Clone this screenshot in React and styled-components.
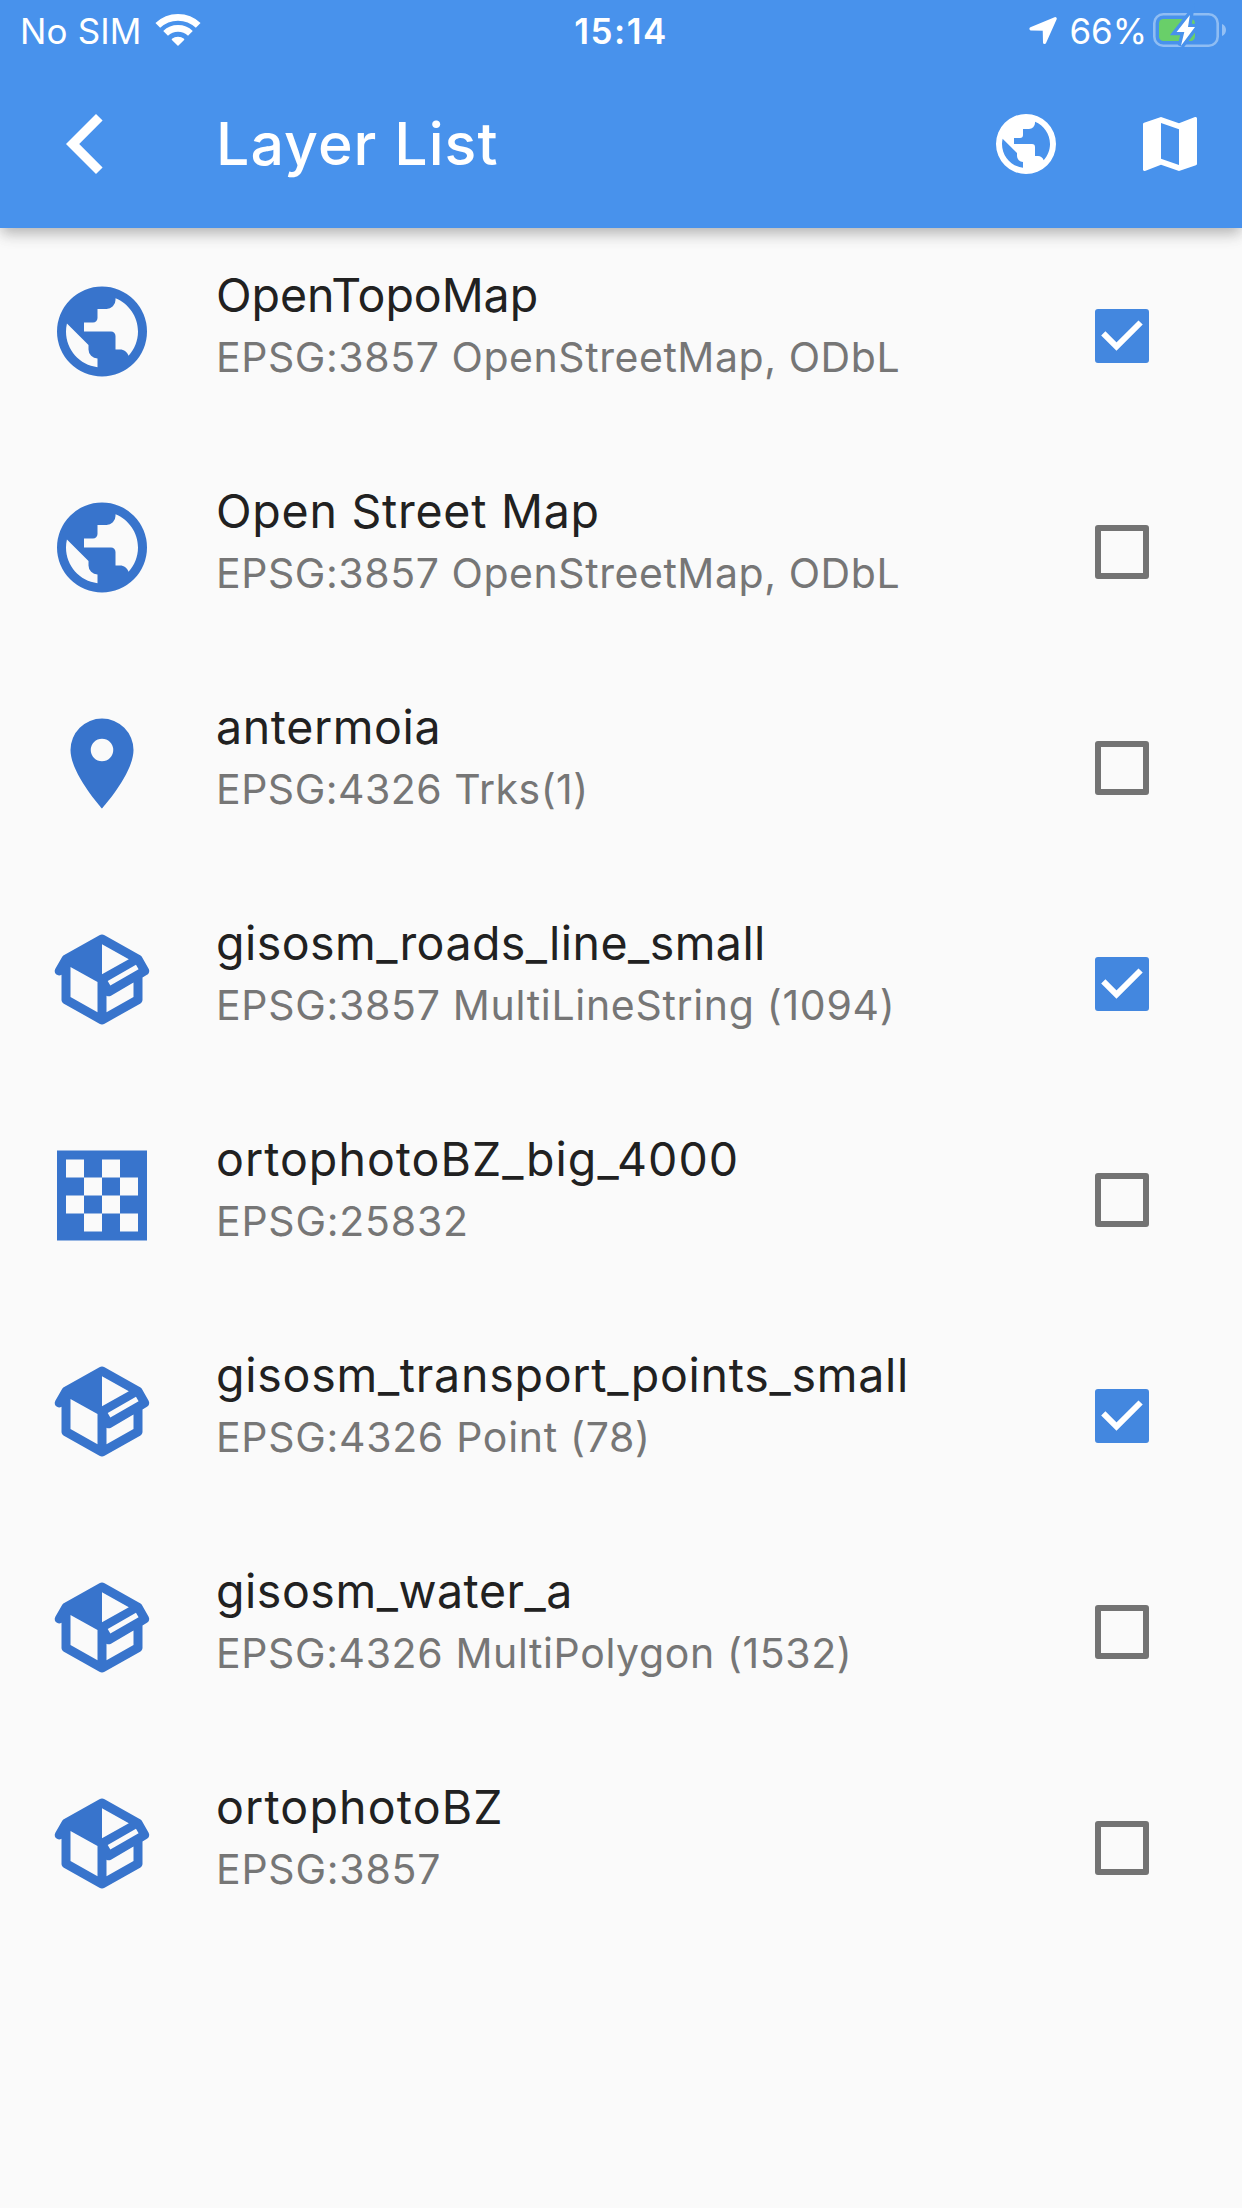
import React from "react";
import styled, { createGlobalStyle } from "styled-components";

const GlobalStyle = createGlobalStyle`
  *, *::before, *::after { box-sizing: border-box; }
  body {
    margin: 0;
    background: #fafafa;
    font-family: Inter, Roboto, "Liberation Sans", sans-serif;
  }
`;

const Screen = styled.div`
  display: flex;
  flex-direction: column;
  width: 1242px;
  height: 2208px;
  overflow: hidden;
  background: #fafafa;
`;

const Header = styled.header`
  flex: none;
  display: flex;
  flex-direction: column;
  height: 228px;
  background: #4892ec;
  color: #fff;
  box-shadow: 0 6px 12px -3px rgba(0, 0, 0, 0.17), 0 8px 14px rgba(0, 0, 0, 0.11),
    0 3px 22px rgba(0, 0, 0, 0.06);
`;

const StatusBar = styled.div`
  display: grid;
  grid-template-columns: 1fr auto 1fr;
  height: 60px;
  padding: 0 14px 0 20px;
  line-height: 62px;
  font-size: 35px;
`;

const StatusGroup = styled.div`
  display: flex;
  align-items: flex-start;
  justify-content: ${(p) => (p.$end ? "flex-end" : "flex-start")};
  height: 60px;
`;

const StatusText = styled.span`
  letter-spacing: ${(p) => p.$track || 0}px;
  white-space: nowrap;
`;

const Clock = styled.span`
  padding-right: 6px;
  font-weight: 600;
  letter-spacing: 1.5px;
`;

const StatusIcon = styled.svg`
  display: block;
  flex: none;
  height: 60px;
  width: ${(p) => p.$width}px;
  margin-left: ${(p) => p.$gap || 0}px;
`;

const AppBar = styled.div`
  display: flex;
  align-items: center;
  height: 168px;
  padding: 0 36px 0 60px;
`;

const IconButton = styled.button`
  display: grid;
  place-items: center;
  width: 72px;
  height: 72px;
  padding: 0;
  border: 0;
  background: none;
  color: inherit;
`;

const Glyph = styled.svg`
  display: block;
  width: ${(p) => p.$size}px;
  height: ${(p) => p.$size}px;
  fill: currentColor;
`;

const Title = styled.h1`
  flex: 1;
  margin: 0;
  padding-left: 84px;
  font-size: 59px;
  font-weight: 500;
  line-height: 72px;
  letter-spacing: 1.05px;
`;

const Actions = styled.div`
  display: flex;
  gap: 72px;
`;

const List = styled.ul`
  margin: 0;
  padding: 0;
  list-style: none;
`;

const Row = styled.li`
  display: flex;
  align-items: flex-start;
  height: 216px;
  padding: 0 93px 0 48px;
`;

const Leading = styled.div`
  flex: none;
  width: 108px;
  margin: 49px 60px 0 0;
  color: #3874cc;
`;

const Text = styled.div`
  display: flex;
  flex: 1;
  flex-direction: column;
  gap: 2px;
  padding-top: 37px;
  white-space: nowrap;
`;

const Name = styled.span`
  color: #212121;
  font-size: 46.5px;
  line-height: 60px;
  letter-spacing: ${(p) => p.$track}px;
`;

const Detail = styled.span`
  color: #767676;
  font-size: 41px;
  line-height: 60px;
  letter-spacing: ${(p) => p.$track}px;
`;

const Box = styled.span`
  flex: none;
  width: 54px;
  height: 54px;
  margin-top: 81px;
  border: 6px solid ${(p) => (p.$checked ? "#4387df" : "#737373")};
  border-radius: 3px;
  background: ${(p) => (p.$checked ? "#4387df" : "transparent")};
`;

const Tick = styled.svg`
  display: block;
  width: 42px;
  height: 42px;
  fill: none;
  stroke: #fff;
  stroke-width: 6;
`;

const PATHS = {
  globe:
    "M17.9,17.39C17.64,16.59 16.89,16 16,16H15V13A1,1 0 0,0 14,12H8V10H10A1,1 0 0,0 11,9V7H13A2,2 0 0,0 15,5V4.59C17.93,5.77 20,8.64 20,12C20,14.08 19.2,15.97 17.9,17.39M11,19.93C7.05,19.44 4,16.08 4,12C4,11.38 4.08,10.78 4.21,10.21L9,15V16A2,2 0 0,0 11,18M12,2A10,10 0 0,0 2,12A10,10 0 0,0 12,22A10,10 0 0,0 22,12A10,10 0 0,0 12,2Z",
  map: "M20.5 3l-.16.03L15 5.1 9 3 3.36 4.9c-.21.07-.36.25-.36.48V20.5c0 .28.22.5.5.5l.16-.03L9 18.9l6 2.1 5.64-1.9c.21-.07.36-.25.36-.48V3.5c0-.28-.22-.5-.5-.5zM15 19l-6-2.11V5l6 2.11V19z",
  back: "M12 2L14.2 4.2L6.4 12L14.2 19.8L12 22L2 12Z",
  pin: "M12,11.5A2.5,2.5 0 0,1 9.5,9A2.5,2.5 0 0,1 12,6.5A2.5,2.5 0 0,1 14.5,9A2.5,2.5 0 0,1 12,11.5M12,2A7,7 0 0,0 5,9C5,14.25 12,22 12,22C12,22 19,14.25 19,9A7,7 0 0,0 12,2Z",
  package:
    "M2,10.96C1.5,10.68 1.35,10.07 1.63,9.59L3.13,7C3.24,6.8 3.41,6.66 3.6,6.58L11.43,2.18C11.59,2.06 11.79,2 12,2C12.21,2 12.41,2.06 12.57,2.18L20.47,6.62C20.66,6.72 20.82,6.88 20.91,7.08L22.36,9.6C22.64,10.08 22.47,10.69 22,10.96L21,11.54V16.5C21,16.88 20.79,17.21 20.47,17.38L12.57,21.82C12.41,21.94 12.21,22 12,22C11.79,22 11.59,21.94 11.43,21.82L3.53,17.38C3.21,17.21 3,16.88 3,16.5V10.96C2.7,11.13 2.32,11.14 2,10.96M12,4.15V10.85L17.96,7.5L12,4.15M5,15.91L11,19.29V12.58L5,9.21V15.91M19,15.91V12.69L14,15.59C13.67,15.77 13.3,15.76 13,15.6V19.29L19,15.91M13.85,13.36L20.13,9.73L19.55,8.72L13.27,12.35L13.85,13.36Z",
  raster:
    "M2,2H22V22H2ZM4,4V8H8V4ZM12,4V8H16V4ZM8,8V12H12V8ZM16,8V12H20V8ZM4,12V16H8V12ZM12,12V16H16V12ZM8,16V20H12V16ZM16,16V20H20V16Z",
};

function Icon({ name, size, shift = 0 }) {
  return (
    <Glyph $size={size} viewBox={`0 ${shift} 24 24`} aria-hidden="true">
      <path fillRule="evenodd" d={PATHS[name]} />
    </Glyph>
  );
}

function Wifi() {
  return (
    <StatusIcon $width={48} $gap={12} viewBox="154 0 48 60">
      <g fill="none" stroke="#fff" strokeWidth="6.8">
        <path d="M157.8 25.4A29.2 29.2 0 0 1 198.2 25.4" />
        <path d="M165.6 33.4A17.8 17.8 0 0 1 190.4 33.4" />
      </g>
      <path
        d="M178 45L172.4 39.4A8.6 8.6 0 0 1 183.6 39.4Z"
        fill="#fff"
        stroke="#fff"
        strokeWidth="1.4"
        strokeLinejoin="round"
      />
    </StatusIcon>
  );
}

function Location() {
  return (
    <StatusIcon $width={30} viewBox="0 -15 30 60">
      <path
        d="M27.2 3.7L3 13.8L16.3 14.2L16.6 27.4Z"
        fill="#fff"
        stroke="#fff"
        strokeWidth="3.2"
        strokeLinejoin="round"
      />
    </StatusIcon>
  );
}

const BOLT = "M39.9 15L26.6 32H34.3L31 45.7L45 27H38Z";

function Battery() {
  return (
    <StatusIcon $width={78} $gap={3} viewBox="0 0 78 60">
      <rect x="4.3" y="14.3" width="63.4" height="31.4" rx="9" fill="none" stroke="#8fbdf3" strokeWidth="2.6" />
      <path d="M72 24C74.8 25 76 27.5 76 30S74.8 35 72 36Z" fill="#94c0f4" />
      <rect x="9" y="19" width="36" height="22" rx="4.5" fill="#69cf69" />
      <path d={BOLT} fill="#4892ec" stroke="#4892ec" strokeWidth="6.6" />
      <path d={BOLT} fill="#fff" />
    </StatusIcon>
  );
}

function Checkbox({ checked }) {
  return (
    <Box $checked={checked} role="checkbox" aria-checked={checked}>
      {checked && (
        <Tick viewBox="6 6 42 42">
          <path d="M8.3 24.4L21.5 37.6L45.6 13.5" />
        </Tick>
      )}
    </Box>
  );
}

const layers = [
  { icon: "globe", name: "OpenTopoMap", detail: "EPSG:3857 OpenStreetMap, ODbL", on: true, track: [-0.05, 0.56] },
  { icon: "globe", name: "Open Street Map", detail: "EPSG:3857 OpenStreetMap, ODbL", on: false, track: [0.75, 0.56] },
  { icon: "pin", name: "antermoia", detail: "EPSG:4326 Trks(1)", on: false, track: [0.61, 0.5] },
  { icon: "package", name: "gisosm_roads_line_small", detail: "EPSG:3857 MultiLineString (1094)", on: true, track: [0.45, 0.69] },
  { icon: "raster", name: "ortophotoBZ_big_4000", detail: "EPSG:25832", on: false, track: [1.03, 0.76] },
  { icon: "package", name: "gisosm_transport_points_small", detail: "EPSG:4326 Point (78)", on: true, track: [0.74, 0.69] },
  { icon: "package", name: "gisosm_water_a", detail: "EPSG:4326 MultiPolygon (1532)", on: false, track: [0.53, 0.61] },
  { icon: "package", name: "ortophotoBZ", detail: "EPSG:3857", on: false, track: [1.16, 0.76] },
];

export default function App() {
  return (
    <>
      <GlobalStyle />
      <Screen>
        <Header>
          <StatusBar>
            <StatusGroup>
              <StatusText $track={0.16}>No SIM</StatusText>
              <Wifi />
            </StatusGroup>
            <Clock>15:14</Clock>
            <StatusGroup $end>
              <Location />
              <StatusIcon as="span" $width={12} />
              <StatusText $track={-0.1}>66%</StatusText>
              <Battery />
            </StatusGroup>
          </StatusBar>
          <AppBar>
            <IconButton aria-label="Back">
              <Icon name="back" size={72} />
            </IconButton>
            <Title>Layer List</Title>
            <Actions>
              <IconButton aria-label="Online sources">
                <Icon name="globe" size={72} />
              </IconButton>
              <IconButton aria-label="Map">
                <Icon name="map" size={72} />
              </IconButton>
            </Actions>
          </AppBar>
        </Header>
        <List>
          {layers.map((l) => (
            <Row key={l.name}>
              <Leading>
                <Icon name={l.icon} size={108} shift={-0.11} />
              </Leading>
              <Text>
                <Name $track={l.track[0]}>{l.name}</Name>
                <Detail $track={l.track[1]}>{l.detail}</Detail>
              </Text>
              <Checkbox checked={l.on} />
            </Row>
          ))}
        </List>
      </Screen>
    </>
  );
}
